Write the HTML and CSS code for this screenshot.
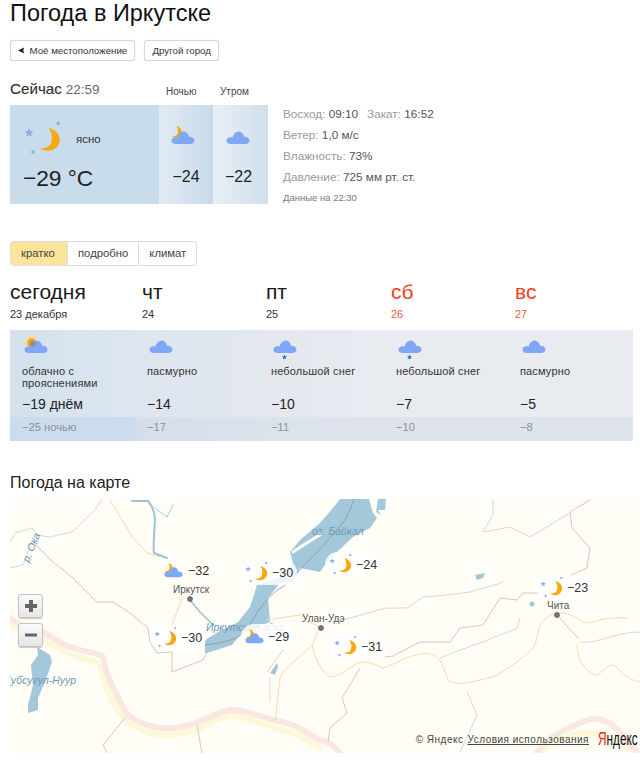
FILE: index.html
```html
<!DOCTYPE html>
<html lang="ru">
<head>
<meta charset="utf-8">
<title>Погода в Иркутске</title>
<link rel="stylesheet" href="styles.css">
</head>
<body>
<svg class="defs" aria-hidden="true">
  <defs>
    <path id="cloud" d="M4 13.5C1.8 13.5 0 12 0 10C0 8 1.8 6.7 4 6.7C5 6.7 5.5 6.9 6 7C7 3 9.5 1 12 1C15 1 17 3.5 17.5 6.2C20.5 6 23 7.6 23 10C23 12.2 21 13.5 19 13.5Z"/>
    <path id="moon" d="M9 0C16 2 20 7 20 12C20 19 14 23 9 23C5 23 2 22 0 20C4 21 8 20 10.5 17C13 13 13 6 9 0Z"/>
    <symbol id="ic-night" viewBox="0 0 40 40">
      <path class="star" d="M5.500 9l1.300 3.200 3.400.3-2.600 2.200.8 3.300-2.900-1.800-2.900 1.800.8-3.300-2.600-2.200 3.400-.3z"/>
      <circle class="star" cx="37" cy="3.500" r="1.900"/>
      <circle class="star" cx="9.700" cy="34.600" r="1.900"/>
      <use href="#moon" class="moon" transform="translate(17 8.500) scale(1.080)"/>
    </symbol>
    <symbol id="ic-cloud" viewBox="0 0 24 19" preserveAspectRatio="xMidYMin meet">
      <use href="#cloud" class="cloud" transform="translate(.5 4.500)"/>
    </symbol>
    <symbol id="ic-cloud-moon" viewBox="0 0 24 19" preserveAspectRatio="xMidYMin meet">
      <use href="#moon" class="moon" transform="translate(1 0) scale(.5)"/>
      <use href="#cloud" class="cloud" transform="translate(.5 4.500)"/>
    </symbol>
    <symbol id="ic-sun-cloud" viewBox="0 0 24 19" preserveAspectRatio="xMidYMin meet">
      <circle cx="7.500" cy="7.500" r="6.800" class="rays"/>
      <circle cx="7.500" cy="7.500" r="4.300" class="sun"/>
      <use href="#cloud" class="cloud" transform="translate(.5 4.500)"/>
      <circle cx="8.800" cy="8.800" r="2.800" class="shade"/>
    </symbol>
    <symbol id="ic-snow" viewBox="0 0 24 24" preserveAspectRatio="xMidYMin meet">
      <use href="#cloud" class="cloud" transform="translate(.5 4.500)"/>
      <path class="flake" d="M11.500 19.500l.8 1.800 1.900.1-1.500 1.200.5 1.900-1.700-1-1.700 1 .5-1.900-1.500-1.200 1.900-.1z"/>
    </symbol>
  </defs>
</svg>

<main class="page">
  <h1 class="title">Погода в Иркутске</h1>

  <div class="actions">
    <button class="btn btn-loc"><svg class="loc-arrow" viewBox="0 0 8 8"><path d="M0 4 7 .5 6 4 7 7.500Z"/></svg>Моё местоположение</button>
    <button class="btn">Другой город</button>
  </div>

  <section class="now">
    <div class="now-head">
      <div class="now-title"><b>Сейчас</b> <span>22:59</span></div>
      <div class="now-part part-night">Ночью</div>
      <div class="now-part part-morning">Утром</div>
    </div>
    <div class="now-body">
      <div class="now-panel">
        <div class="now-main">
          <div class="now-cond">
            <svg class="ic-big"><use href="#ic-night"/></svg>
            <span>ясно</span>
          </div>
          <div class="now-temp">−29 °C</div>
        </div>
        <div class="now-col col-night">
          <svg class="ic-med"><use href="#ic-cloud-moon"/></svg>
          <div class="col-temp">−24</div>
        </div>
        <div class="now-col col-morning">
          <svg class="ic-med"><use href="#ic-cloud"/></svg>
          <div class="col-temp">−22</div>
        </div>
      </div>
      <div class="details">
        <div>Восход: <b>09:10</b><span class="gap">Закат:</span> <b>16:52</b></div>
        <div>Ветер: <b>1,0 м/с</b></div>
        <div>Влажность: <b>73%</b></div>
        <div>Давление: <b>725 мм рт. ст.</b></div>
        <div class="stamp">Данные на 22:30</div>
      </div>
    </div>
  </section>

  <div class="tabs">
    <div class="tab tab-on">кратко</div>
    <div class="tab">подробно</div>
    <div class="tab">климат</div>
  </div>

  <section class="forecast">
    <div class="days">
      <div class="day"><div class="day-name">сегодня</div><div class="day-date">23 декабря</div></div>
      <div class="day"><div class="day-name">чт</div><div class="day-date">24</div></div>
      <div class="day"><div class="day-name">пт</div><div class="day-date">25</div></div>
      <div class="day weekend"><div class="day-name">сб</div><div class="day-date">26</div></div>
      <div class="day weekend"><div class="day-name">вс</div><div class="day-date">27</div></div>
    </div>
    <div class="cells">
      <div class="cell c1">
        <svg class="ic-day"><use href="#ic-sun-cloud"/></svg>
        <div class="cell-desc">облачно с прояснениями</div>
        <div class="cell-hi">−19 днём</div>
        <div class="cell-lo">−25 ночью</div>
      </div>
      <div class="cell c2">
        <svg class="ic-day"><use href="#ic-cloud"/></svg>
        <div class="cell-desc">пасмурно</div>
        <div class="cell-hi">−14</div>
        <div class="cell-lo">−17</div>
      </div>
      <div class="cell c3">
        <svg class="ic-day"><use href="#ic-snow"/></svg>
        <div class="cell-desc">небольшой снег</div>
        <div class="cell-hi">−10</div>
        <div class="cell-lo">−11</div>
      </div>
      <div class="cell c4">
        <svg class="ic-day"><use href="#ic-snow"/></svg>
        <div class="cell-desc">небольшой снег</div>
        <div class="cell-hi">−7</div>
        <div class="cell-lo">−10</div>
      </div>
      <div class="cell c5">
        <svg class="ic-day"><use href="#ic-cloud"/></svg>
        <div class="cell-desc">пасмурно</div>
        <div class="cell-hi">−5</div>
        <div class="cell-lo">−8</div>
      </div>
    </div>
  </section>

  <h2 class="map-title">Погода на карте</h2>
  <div class="map">
    <svg class="map-art" viewBox="10 499 630 254">
      <path class="border-y" d="M10 624C20 632 35 638 43 640C55 647 65 652 73 655C85 660 95 661 100 664C103 680 108 692 113 702C118 712 124 720 130 724C140 730 150 734 160 735C170 737 180 733 190 732C205 727 218 718 230 716C245 716 255 722 263 724C275 728 285 731 293 733C305 736 312 745 320 748"/>
      <path class="border-p" d="M10 618C20 626 35 631 43 632C55 640 65 646 73 648C85 652 97 652 103 657C105 672 112 686 117 695C122 706 126 714 130 717C140 723 150 727 160 728C170 730 180 727 190 725C205 720 218 712 230 710C245 710 255 715 263 717C275 721 285 722 293 725C305 729 312 738 320 740C330 741 336 748 340 753"/>
      <path class="border-y" d="M540 753C555 740 575 732 590 733C610 735 625 745 635 753"/>
      <path class="border-p" d="M537 752C548 738 562 730 590 719C600 718 610 722 618 730C625 738 632 745 636 750"/>

      <path class="water" d="M37 647L50 655 52 662 45 682 38 698 38 710 28 713 28 705 33 685 31 665 38 655Z"/>
      <path class="water" d="M205 653L205 640 218 632 238 622 250 607 257 585 277 578 293 563 290 552 300 540 320 523 333 508 340 499 369 499 373 513 377 518 370 528 353 537 337 552 327 562 320 572 300 568 293 582 280 583 268 598 270 622 255 628 240 635 232 645 207 653Z"/>
      <path class="island" d="M293 552C303 545 312 540 321 534"/>
      <path class="water" d="M378 499H386L385 510 378 510 381 515 376 512Z"/>
      <path class="water" d="M270 673L277 663 278 667 275 675Z"/>
      <path class="water" d="M475 575L485 573 483 578 477 580Z"/>
      <circle class="water" cx="532" cy="604" r="2.500"/>
      <path class="baikal-line" d="M205 645C225 642 240 640 248 628C258 610 268 595 285 585C300 570 325 545 345 520C350 510 352 505 354 499"/>

      <path class="riv-wide" d="M132 501H148C153 507 155 512 155 520C154 535 153 548 154 553L167 558"/>
      <path class="riv" d="M155 508L167 517 173 505"/>
      <path class="riv-mid" d="M190 600L200 612 213 625"/>

      <path class="riv-light" d="M102 500L93 512 72 532 50 537 37 535 32 528 15 533 10 543"/>
      <path class="riv-light" d="M33 538L23 565 10 568"/>
      <path class="riv-light" d="M340 620C355 618 375 610 387 608L407 608 423 597C440 596 455 594 470 592 480 588 495 586 503 582"/>
      <path class="riv-light" d="M440 658C455 652 470 646 483 642 495 636 510 632 517 628L520 618"/>
      <path class="riv-light" d="M570 513L530 537 510 527 483 532 493 515 493 500"/>
      <path class="riv-light" d="M467 692L477 715 460 752"/>
      <path class="riv-light" d="M580 642C595 645 615 632 640 632"/>
      <path class="riv-light" d="M270 678L270 702M267 672 283 650"/>

      <path class="bound" d="M33 542L53 562 73 578 97 602 113 602 130 613 148 628 150 642 157 653 172 652 172 672 203 660 207 652"/>
      <path class="bound" d="M385 657L393 656 420 642 450 642 460 628 483 625 500 598 517 600 523 593 540 593"/>
      <path class="bound" d="M590 500L570 512 572 528 590 548 587 568 560 580"/>
      <path class="bound" d="M360 668L350 685 342 698 347 713 330 728 328 742"/>
      <path class="bound" d="M125 718L103 745 107 753M197 725L202 753"/>
      <path class="bound" d="M557 615L578 638"/>

      <path class="road" d="M110 500L133 538 147 553 160 557"/>
      <path class="road" d="M182 598L172 625"/>
      <path class="road" d="M267 620L300 615 320 628 312 645 283 672 280 678 275 722"/>
      <path class="road" d="M312 645C315 660 322 672 330 677 338 677 350 668 357 663 365 660 375 664 383 668 395 665 405 656 417 655 425 652 435 654 437 657 444 664 445 674 448 680 455 685 465 683 467 683 480 680 490 678 497 675 510 667 525 657 533 648 538 640 538 628 542 622 548 616 552 613 557 613 565 612 570 615 575 617 585 625 590 623 600 620 612 617 620 618 628 618 635 617 640 617"/>
      <path class="road" d="M577 645C578 655 580 662 583 665 590 673 594 676 597 675 603 671 608 665 613 665 620 668 625 680 640 682"/>

      <circle class="city" cx="190" cy="599" r="2.500"/>
      <circle class="city" cx="321" cy="628" r="2.500"/>
      <circle class="city" cx="557" cy="615" r="2.500"/>
      <text class="t-city" x="173" y="593">Иркутск</text>
      <text class="t-city" x="302" y="622">Улан-Удэ</text>
      <text class="t-city" x="547" y="609">Чита</text>
      <text class="t-geo" x="206" y="631">Иркутское вдхр</text>
      <text class="t-geo" x="312" y="535">оз. Байкал</text>
      <text class="t-geo" x="4" y="684">Хубсугул-Нуур</text>
      <text class="t-geo" transform="translate(29 563) rotate(-68)">р. Ока</text>
    </svg>

    <div class="mk" style="left:150px;top:59px"><svg class="ic-mk"><use href="#ic-cloud-moon"/></svg><span>−32</span></div>
    <div class="mk mk-pill" style="left:231px;top:61px"><svg class="ic-night"><use href="#ic-night"/></svg><span>−30</span></div>
    <div class="mk mk-pill" style="left:315px;top:53px"><svg class="ic-night"><use href="#ic-night"/></svg><span>−24</span></div>
    <div class="mk mk-pill" style="left:526px;top:76px"><svg class="ic-night"><use href="#ic-night"/></svg><span>−23</span></div>
    <div class="mk mk-pill" style="left:320px;top:135px"><svg class="ic-night"><use href="#ic-night"/></svg><span>−31</span></div>
    <div class="mk mk-pill" style="left:140px;top:126px"><svg class="ic-night"><use href="#ic-night"/></svg><span>−30</span></div>
    <div class="mk mk-pill" style="left:231px;top:125px"><svg class="ic-mk"><use href="#ic-cloud-moon"/></svg><span>−29</span></div>

    <div class="zoom">
      <div class="zoom-btn"><svg viewBox="0 0 14 14"><path d="M5 1H9V5H13V9H9V13H5V9H1V5H5Z"/></svg></div>
      <div class="zoom-btn"><svg viewBox="0 0 14 14"><path d="M1 5.500H13V8.500H1Z"/></svg></div>
    </div>

    <div class="copy">
      <span>© Яндекс</span> <span class="terms">Условия использования</span>
      <span class="ya"><em>Я</em>ндекс</span>
    </div>
  </div>
</main>
</body>
</html>
```
FILE: styles.css
```css
* { box-sizing: border-box; }
html, body { margin: 0; padding: 0; background: #fff; }
body { font-family: "Liberation Sans", Arial, sans-serif; color: #222; overflow: hidden; }
.defs { position: absolute; width: 0; height: 0; }
.page { padding-left: 10px; height: 761px; }

.moon { fill: #f6a90e; }
.cloud { fill: #7fa7f6; }
.star { fill: #8fa9e6; }
.rays { fill: #fbdc9c; }
.sun { fill: #f59f1e; }
.shade { fill: #8a8f9d; }
.flake { fill: #2a72e8; }

.title { margin: 0; font-size: 23.500px; font-weight: 400; line-height: 27px; color: #111; }

.actions { display: flex; gap: 9px; margin-top: 13px; }
.btn {
  height: 21px; padding: 0 7.500px; font: 9.700px "Liberation Sans", Arial, sans-serif; color: #333;
  background: #fff; border: 1px solid #d8d8d8; border-radius: 3px; box-shadow: 0 0 1px #ccc;
  display: flex; align-items: center; white-space: nowrap;
}
.btn-loc { width: 125px; }
.loc-arrow { width: 7px; height: 7px; margin: 0 5px 0 -1px; fill: #222; flex: none; }

.now { margin-top: 18px; }
.now-head { display: flex; align-items: flex-end; height: 26px; }
.now-title { width: 156px; font-size: 13.500px; color: #666; line-height: 19px; padding-bottom: 6px; }
.now-title b { font-size: 15.200px; font-weight: 400; color: #333; -webkit-text-stroke: .15px #333; }
.now-part { font-size: 10px; color: #444; line-height: 12px; padding-bottom: 7px; }
.part-night { width: 54px; }
.now-body { display: flex; }
.now-panel { display: flex; width: 258px; height: 99px; }
.now-main { width: 149px; background: #c9dcec; padding: 15px 0 0 13px; }
.now-cond { display: flex; align-items: center; font-size: 11.500px; color: #333; height: 37px; margin-left: 1px; gap: 15px; }
.ic-big { width: 37px; height: 37px; }
.now-temp { font-size: 22.700px; line-height: 28px; margin-top: 7px; color: #222; }
.now-col { display: flex; flex-direction: column; align-items: center; }
.col-night { width: 54px; background: linear-gradient(90deg, #e2ebf4, #c8dae9); }
.col-morning { width: 55px; background: linear-gradient(90deg, #e8eff6, #d0dfeb); }
.ic-med { width: 24px; height: 19px; margin: 21px 6px 0 0; }
.col-temp { font-size: 16px; line-height: 20px; margin-top: 22px; color: #222; }
.col-morning .col-temp { margin-right: 4px; }
.details { margin-left: 15px; font-size: 11.750px; color: #9a9a9a; line-height: 21px; margin-top: -2px; }
.details b { font-weight: 400; color: #555; }
.gap { margin-left: 9px; }
.stamp { font-size: 9.500px; color: #777; line-height: 22px; }

.tabs { display: inline-flex; margin-top: 32px; height: 25px; border: 1px solid #ddd; border-radius: 3px; font-size: 11.300px; color: #444; background: #fff; }
.tab { padding: 0 10px; line-height: 23px; border-left: 1px solid #ddd; }
.tab:first-child { border-left: 0; }
.tab-on { background: #fce59b; border-radius: 2px 0 0 2px; width: 56px; }

.forecast { margin-top: 13px; width: 623px; }
.days, .cells { display: grid; grid-template-columns: 125px 124px 125px 124px 125px; }
.day { padding-left: 7px; }
.day:first-child { padding-left: 0; }
.day-name { font-size: 21px; line-height: 26px; color: #1a1a1a; }
.day-date { font-size: 11px; line-height: 17px; color: #333; margin-top: 1px; }
.weekend .day-name { color: #f0401e; }
.weekend .day-date { color: #ef5a42; }
.cells { margin-top: 7px; height: 111px; }
.cell { padding: 5px 0 0 12px; display: flex; flex-direction: column; }
.c1 { background: linear-gradient(90deg, #d3e1ee, #dde6f0); }
.c2 { background: linear-gradient(90deg, #dde5ef, #e3e8ef); }
.c3 { background: linear-gradient(90deg, #e4e8ee, #e8ebf0); }
.c4 { background: #e8ebf0; }
.c5 { background: #e8ebf0; }
.ic-day { width: 24px; height: 24px; margin-left: 2px; display: block; flex: none; }
.cell-desc { height: 28px; margin-top: 7px; font-size: 11px; line-height: 11.500px; color: #333; letter-spacing: .15px; width: 112px; flex: none; }
.cell-hi { font-size: 14px; line-height: 20px; color: #222; flex: none; }
.cell-lo {
  margin: 3px 0 0 -12px; padding-left: 12px; height: 24px; line-height: 20px; font-size: 11.200px; color: #8b8f94;
  background: rgba(180, 200, 222, .18); flex: none;
}
.c1 .cell-lo { background: #cbdcec; }

.map-title { margin: 33px 0 0; font-size: 16px; font-weight: 400; line-height: 18px; color: #222; }
.map { position: relative; width: 630px; height: 254px; margin-top: 7px; background: #fffdf5; overflow: hidden; }
.map-art { position: absolute; left: 0; top: 0; width: 630px; height: 254px; }
.map-art path { fill: none; stroke-linejoin: round; stroke-linecap: round; }
.map-art .water, .map-art circle.water { fill: #a3c8da; stroke: none; }
.map-art .island { stroke: #fffdf5; stroke-width: 3; }
.map-art .baikal-line { stroke: #7d98a4; stroke-width: .8; }
.map-art .border-p { stroke: #fbe7e1; stroke-width: 6; }
.map-art .border-y { stroke: #fef8da; stroke-width: 6; }
.map-art .riv-wide { stroke: #9cc4d6; stroke-width: 2; }
.map-art .riv-mid { stroke: #9cc4d6; stroke-width: 1.600; }
.map-art .riv { stroke: #a9cbda; stroke-width: 1; }
.map-art .riv-light { stroke: #cfdcdd; stroke-width: 1; }
.map-art .bound { stroke: #c4c6bf; stroke-width: .9; }
.map-art .road { stroke: #f5dcae; stroke-width: 1; }
.city { fill: #777; stroke: #444; stroke-width: .6; }
.t-city { font: 10px "Liberation Sans", Arial, sans-serif; fill: #555; }
.t-geo { font: italic 10.500px "Liberation Sans", Arial, sans-serif; fill: #6f98b8; }

.mk { position: absolute; display: flex; align-items: center; height: 25px; font-size: 12.500px; color: #333; padding: 0 4px; border-radius: 13px; gap: 3px; }
.mk-pill { background: rgba(255, 255, 255, .84); gap: 2px; }
.ic-mk { width: 19px; height: 15px; margin-right: 2px; }
.ic-night { width: 23px; height: 23px; margin-right: 2px; }

.zoom { position: absolute; left: 8px; top: 95px; display: flex; flex-direction: column; gap: 5px; }
.zoom-btn {
  width: 25px; height: 24px; border: 1px solid #c4c4c4; border-radius: 3px;
  background: linear-gradient(#fafafa, #e6e6e6); box-shadow: 0 1px 1px rgba(0,0,0,.2);
  display: flex; align-items: center; justify-content: center;
}
.zoom-btn svg { width: 14px; height: 14px; fill: #666; }

.copy { position: absolute; right: 6px; bottom: 4px; display: flex; align-items: center; gap: 4px; font-size: 10px; color: #444; letter-spacing: .5px; white-space: nowrap; }
.terms { text-decoration: underline; }
.ya { font-size: 19px; letter-spacing: 0; color: #111; display: inline-block; width: 36px; margin-left: 5px; transform: scaleX(.62); transform-origin: 0 50%; line-height: 20px; }
.ya em { font-style: normal; color: #e0281c; }
```
